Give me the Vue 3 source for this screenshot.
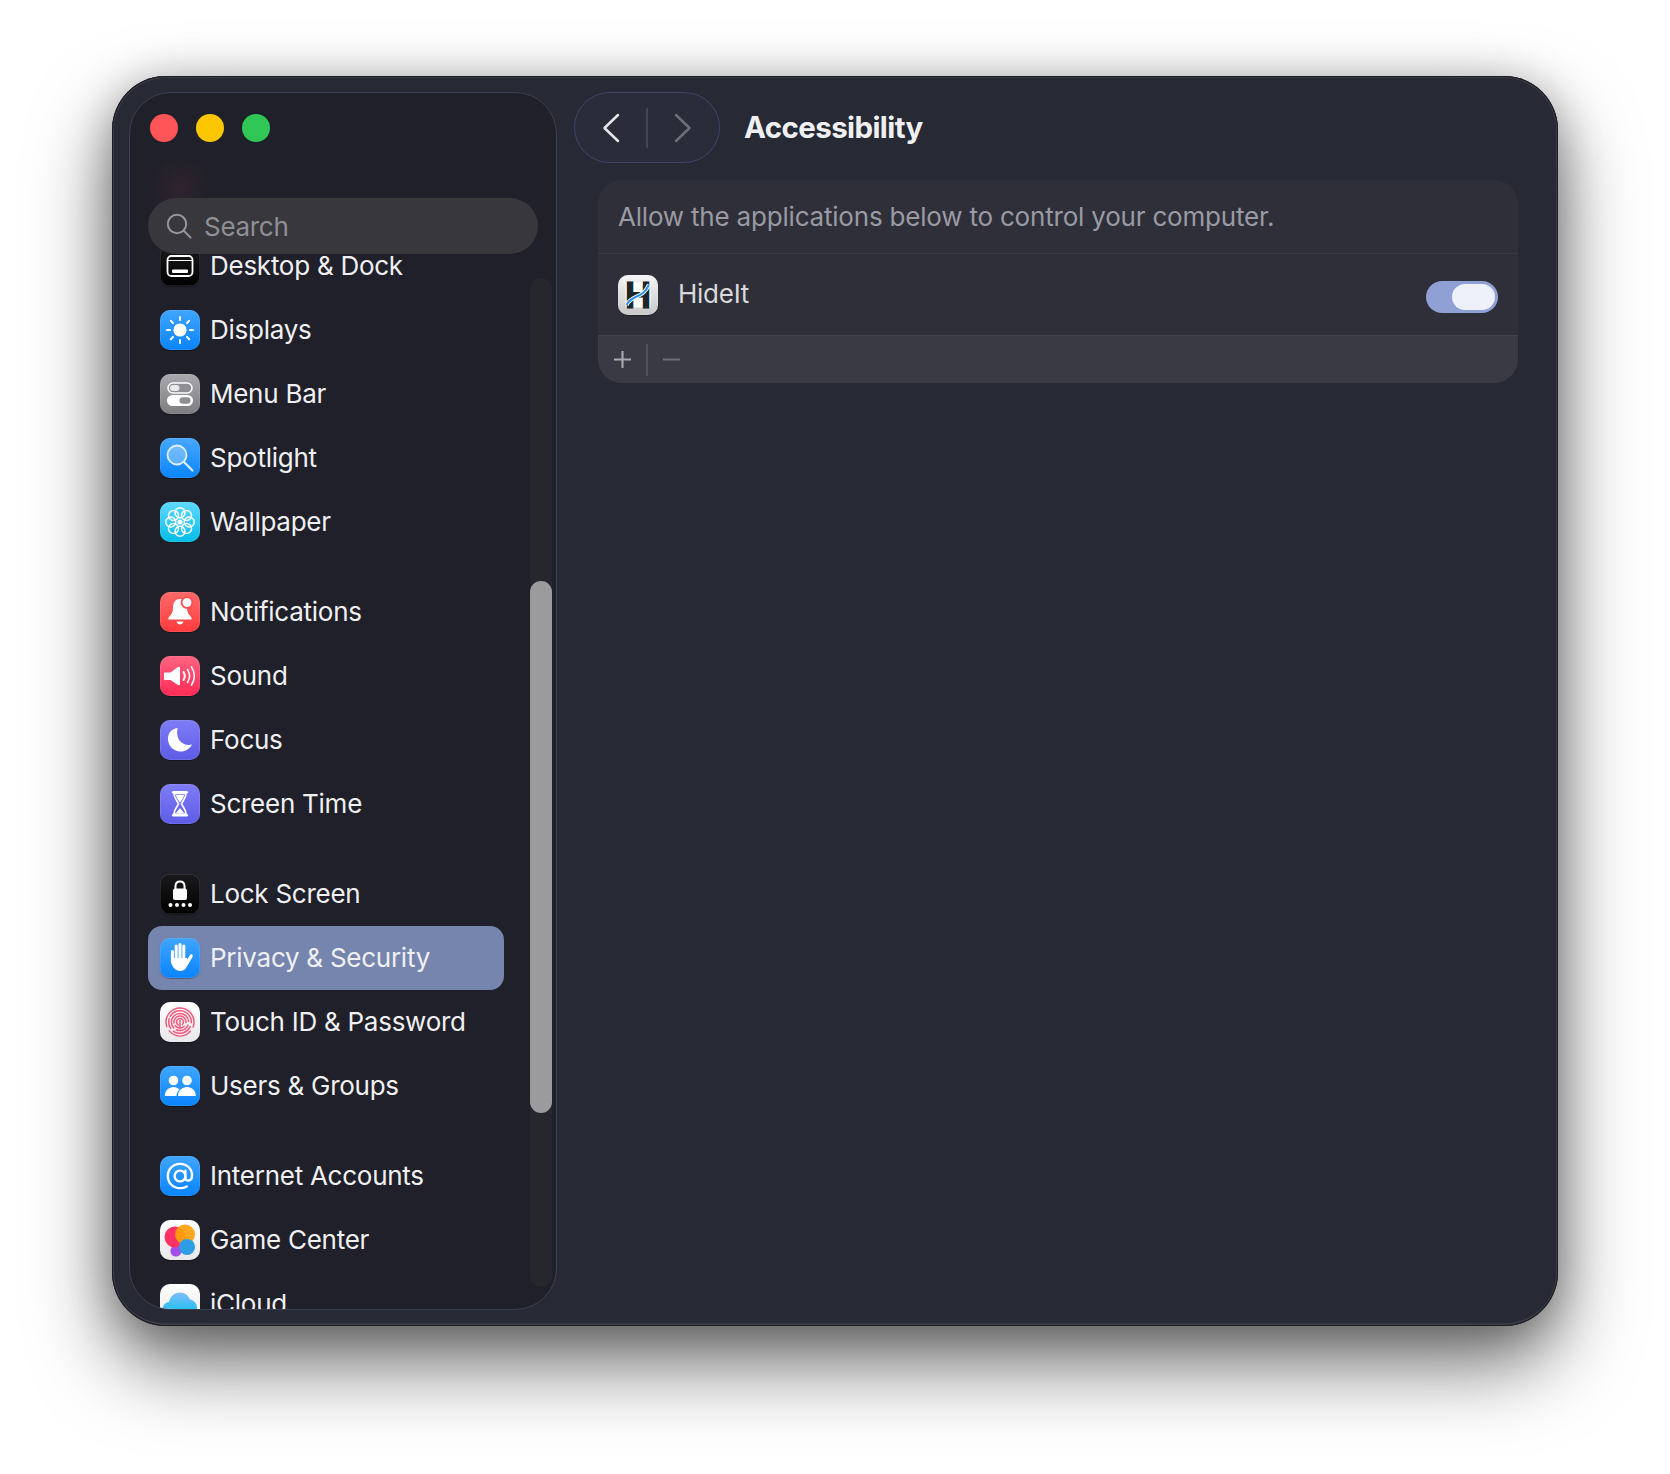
<script setup>
const groups = [
  [
    { id: 'desktop', label: 'Desktop & Dock' },
    { id: 'displays', label: 'Displays' },
    { id: 'menubar', label: 'Menu Bar' },
    { id: 'spotlight', label: 'Spotlight' },
    { id: 'wallpaper', label: 'Wallpaper' },
  ],
  [
    { id: 'notifications', label: 'Notifications' },
    { id: 'sound', label: 'Sound' },
    { id: 'focus', label: 'Focus' },
    { id: 'screentime', label: 'Screen Time' },
  ],
  [
    { id: 'lock', label: 'Lock Screen' },
    { id: 'privacy', label: 'Privacy & Security', active: true },
    { id: 'touchid', label: 'Touch ID & Password' },
    { id: 'users', label: 'Users & Groups' },
  ],
  [
    { id: 'internet', label: 'Internet Accounts' },
    { id: 'gamecenter', label: 'Game Center' },
    { id: 'icloud', label: 'iCloud' },
  ],
]
const rays = [0, 45, 90, 135, 180, 225, 270, 315]
const petals = [0, 45, 90, 135, 180, 225, 270, 315]
</script>

<template>
  <div class="page">
    <div class="window">
      <aside class="sidebar">
        <div class="side-head">
          <div class="lights">
            <span class="light red"></span>
            <span class="light yellow"></span>
            <span class="light green"></span>
          </div>
          <div class="search">
            <svg class="search-icon" viewBox="0 0 26 26" fill="none" stroke="#96969b" stroke-width="2" stroke-linecap="round">
              <circle cx="11" cy="11" r="9.2" />
              <path d="M17.8 17.8 L24.6 24.6" />
            </svg>
            <span class="search-text">Search</span>
          </div>
        </div>

        <div class="list">
          <div v-for="(group, gi) in groups" :key="gi" class="group">
            <div v-for="item in group" :key="item.id" class="row" :class="{ active: item.active }">
              <span class="tile" :class="'t-' + item.id">
                <svg viewBox="0 0 40 40" class="glyph">
                  <template v-if="item.id === 'desktop'">
                    <rect x="7.5" y="10" width="25" height="20" rx="4" fill="none" stroke="#fff" stroke-width="1.8" />
                    <path d="M8 14.5 H32" stroke="#fff" stroke-width="1.2" />
                    <rect x="12" y="23.5" width="16" height="3.6" rx="1" fill="#fff" />
                  </template>
                  <template v-else-if="item.id === 'displays'">
                    <circle cx="20" cy="20" r="6.6" fill="#fff" />
                    <rect v-for="r in rays" :key="r" x="19" y="6" width="2" height="5" rx="1" fill="#fff" :transform="`rotate(${r} 20 20)`" />
                  </template>
                  <template v-else-if="item.id === 'menubar'">
                    <rect x="8" y="9" width="24" height="10" rx="5" fill="#8e8e93" stroke="#fff" stroke-width="1.6" />
                    <rect x="10" y="11" width="9.5" height="6" rx="3" fill="#e9e9ec" />
                    <rect x="7" y="21" width="26" height="11" rx="5.5" fill="#fff" />
                    <rect x="19.5" y="23.2" width="11" height="6.6" rx="3.3" fill="#8e8e93" />
                  </template>
                  <template v-else-if="item.id === 'spotlight'">
                    <circle cx="17" cy="17" r="9.5" fill="rgba(255,255,255,.28)" stroke="#dff0ff" stroke-width="1.8" />
                    <path d="M24 24 L32.5 32.5" stroke="#dff0ff" stroke-width="2.2" stroke-linecap="round" />
                  </template>
                  <template v-else-if="item.id === 'wallpaper'">
                    <circle v-for="p in petals" :key="p" cx="20" cy="10.8" r="5" fill="none" stroke="#fff" stroke-width="1.5" :transform="`rotate(${p} 20 20)`" />
                    <circle cx="20" cy="20" r="2.6" fill="#fff" />
                  </template>
                  <template v-else-if="item.id === 'notifications'">
                    <path d="M20 7 C14.5 7 13 12 13 16 C13 20 11.5 22.5 8.5 25.5 L8.5 27.5 H31.5 V25.5 C28.5 22.5 27 20 27 16 C27 12 25.5 7 20 7Z" fill="#fff" />
                    <path d="M16.5 29.6 H23.5 C23 31.6 21.6 32.4 20 32.4 C18.4 32.4 17 31.6 16.5 29.6Z" fill="#fff" />
                    <circle cx="27" cy="10.5" r="5.4" fill="#fff" stroke="#ff4f50" stroke-width="1.8" />
                  </template>
                  <template v-else-if="item.id === 'sound'">
                    <path d="M5 16.5 H10.5 L18 11 C19 10.4 20 11 20 12 V28 C20 29 19 29.6 18 29 L10.5 24 H5 C4.4 24 4 23.6 4 23 V17.5 C4 17 4.4 16.5 5 16.5Z" fill="#fff" />
                    <path d="M23.5 16 C25 18.4 25 21.6 23.5 24" fill="none" stroke="#fff" stroke-width="2" stroke-linecap="round" />
                    <path d="M27.5 13.5 C30 17.4 30 22.6 27.5 26.5" fill="none" stroke="#fff" stroke-width="1.5" stroke-linecap="round" />
                    <path d="M31.5 11 C35 16.5 35 23.5 31.5 29" fill="none" stroke="#fff" stroke-width="1.5" stroke-linecap="round" />
                  </template>
                  <template v-else-if="item.id === 'focus'">
                    <path d="M17.5 8 C10.5 9 7.5 14.5 8 20 C8.6 26.5 14 31.5 20.5 31.5 C25.5 31.5 29.8 28.8 32 24.5 C24 26.5 15 21 17.5 8Z" fill="#fff" />
                  </template>
                  <template v-else-if="item.id === 'screentime'">
                    <rect x="12" y="7" width="16" height="2.6" rx="1.3" fill="#fff" />
                    <rect x="12" y="30" width="16" height="2.6" rx="1.3" fill="#fff" />
                    <path d="M14 9.5 H26 C26 14 23 16.5 21.5 19.8 C23 23 26 26 26 30 H14 C14 26 17 23 18.5 19.8 C17 16.5 14 14 14 9.5Z" fill="none" stroke="#fff" stroke-width="1.6" />
                    <path d="M15.8 11 H24.2 C23.6 14 21.6 16 20 18.5 C18.4 16 16.4 14 15.8 11Z" fill="#fff" />
                    <path d="M16 29 C17 27 19 26 20 24 C21 26 23 27 24 29Z" fill="#fff" />
                  </template>
                  <template v-else-if="item.id === 'lock'">
                    <path d="M15.5 15 V12 C15.5 9 17.4 7.4 20 7.4 C22.6 7.4 24.5 9 24.5 12 V15" fill="none" stroke="#fff" stroke-width="2" />
                    <rect x="13" y="14.5" width="14" height="11.5" rx="2" fill="#fff" />
                    <circle cx="10.5" cy="31" r="2" fill="#fff" />
                    <circle cx="17" cy="31" r="2" fill="#fff" />
                    <circle cx="23.5" cy="31" r="2" fill="#fff" />
                    <circle cx="30" cy="31" r="2" fill="#fff" />
                  </template>
                  <template v-else-if="item.id === 'privacy'">
                    <g stroke="#fff" stroke-linecap="round" fill="none">
                      <path d="M12.4 13.5 V24" stroke-width="3" />
                      <path d="M16.2 8 V22" stroke-width="3" />
                      <path d="M20 6.5 V22" stroke-width="3" />
                      <path d="M23.8 8 V22" stroke-width="3" />
                      <path d="M26.5 26 L31.2 18" stroke-width="3.3" />
                    </g>
                    <path d="M11 20 H27 L28.4 24 C27.6 29 24.6 33 20.5 33 C15.5 33 11 28.5 11 22Z" fill="#fff" />
                  </template>
                  <template v-else-if="item.id === 'touchid'">
                    <g fill="none" stroke="#f2587c" stroke-width="1.5" stroke-linecap="round">
                      <circle cx="20" cy="20" r="14" stroke-dasharray="44 5 24 5 9 4" transform="rotate(200 20 20)" />
                      <circle cx="20" cy="20" r="11.3" stroke-dasharray="30 4 20 4 10 3" transform="rotate(210 20 20)" />
                      <circle cx="20" cy="20" r="8.6" stroke-dasharray="26 4 14 3" transform="rotate(180 20 20)" />
                      <circle cx="20" cy="20" r="6" stroke-dasharray="20 4 10 3" transform="rotate(170 20 20)" />
                      <circle cx="20" cy="20" r="3.4" stroke-dasharray="12 4 5 1" transform="rotate(200 20 20)" />
                      <path d="M20 18.5 V26" />
                    </g>
                  </template>
                  <template v-else-if="item.id === 'users'">
                    <circle cx="13.5" cy="14.5" r="4.8" fill="#fff" />
                    <circle cx="27" cy="14.5" r="4.8" fill="#fff" />
                    <path d="M4.8 30 C4.8 24.6 8.8 21 13.5 21 C16 21 18 22 19.4 23.4 C17.8 25 16.8 27 16.4 30Z" fill="#fff" />
                    <path d="M18 30 C18 24.6 22 21 27 21 C32 21 35.8 24.6 35.8 30Z" fill="#fff" />
                  </template>
                  <template v-else-if="item.id === 'internet'">
                    <g fill="none" stroke="#fff" stroke-width="2.3" stroke-linecap="round">
                      <circle cx="20" cy="20" r="5.4" />
                      <path d="M25.4 14.6 V22 C25.4 25.6 31.6 25.6 32 20.5 C32.6 12.8 26.8 7.8 20 7.8 C13 7.8 7.8 13.2 7.8 20 C7.8 27 13.2 32.2 20 32.2 C22.6 32.2 24.8 31.6 26.8 30.4" />
                    </g>
                  </template>
                  <template v-else-if="item.id === 'gamecenter'">
                    <circle cx="16" cy="31" r="5.6" fill="#a34eea" />
                    <circle cx="15" cy="17" r="10.5" fill="#ff3268" />
                    <circle cx="25" cy="14.5" r="10" fill="#ff9f0a" opacity=".92" />
                    <circle cx="27" cy="27" r="8" fill="#2f9ce6" />
                  </template>
                  <template v-else-if="item.id === 'icloud'">
                    <defs>
                      <linearGradient id="cloudfill" x1="0" y1="0" x2="0" y2="1">
                        <stop offset="0" stop-color="#7fbdfb" />
                        <stop offset="1" stop-color="#0fc0ea" />
                      </linearGradient>
                    </defs>
                    <path d="M10 31 C5.5 31 3 27.8 3 24.5 C3 20.8 5.8 18.2 9 18 C10 12.5 14.5 8.5 20 8.5 C25 8.5 28.4 11.5 29.8 15.5 C34 16 37 19.5 37 23.8 C37 28 34 31 30 31Z" fill="url(#cloudfill)" />
                  </template>
                </svg>
              </span>
              <span class="row-label">{{ item.label }}</span>
            </div>
          </div>
        </div>

        <div class="scrolltrack"><div class="scrollthumb"></div></div>
      </aside>

      <main class="main">
        <header class="topbar">
          <div class="navpill">
            <button class="navbtn">
              <svg viewBox="0 0 20 32" class="chev" fill="none" stroke="#e6e6e9" stroke-width="2.5" stroke-linecap="round" stroke-linejoin="round">
                <path d="M17 3 L3.5 16 L17 29" />
              </svg>
            </button>
            <span class="navdiv"></span>
            <button class="navbtn">
              <svg viewBox="0 0 20 32" class="chev" fill="none" stroke="#6d6e76" stroke-width="2.5" stroke-linecap="round" stroke-linejoin="round">
                <path d="M3 3 L16.5 16 L3 29" />
              </svg>
            </button>
          </div>
          <h1 class="title">Accessibility</h1>
        </header>

        <section class="card">
          <div class="card-head">Allow the applications below to control your computer.</div>
          <div class="card-row">
            <span class="tile t-hideit">
              <svg viewBox="0 0 40 40" class="glyph">
                <rect x="7.5" y="7.5" width="25" height="25" fill="#fff" />
                <text x="20" y="32.5" text-anchor="middle" font-family="Liberation Sans, sans-serif" font-weight="700" font-size="36" stroke="#20242c" stroke-width="1.2" fill="#20242c">H</text>
                <path d="M8.5 30 C14 19 25 24 31 9.5" fill="none" stroke="#fff" stroke-width="4" />
                <path d="M8.5 30 C14 19 25 24 31 9.5" fill="none" stroke="#2b93e8" stroke-width="2" />
              </svg>
            </span>
            <span class="app-name">HideIt</span>
            <span class="toggle"><span class="knob"></span></span>
          </div>
          <div class="card-tools">
            <span class="tool plus"><svg viewBox="0 0 20 20" stroke="#aaaab0" stroke-width="2.2"><path d="M1 10 H19 M10 1 V19" /></svg></span>
            <span class="tooldiv"></span>
            <span class="tool minus"><svg viewBox="0 0 20 20" stroke="#6f6f78" stroke-width="2.2"><path d="M1 10 H19" /></svg></span>
          </div>
        </section>
      </main>
    </div>
  </div>
</template>

<style>
html, body { background: #fff; }
</style>

<style scoped>
.page {
  width: 1670px;
  height: 1474px;
  box-sizing: border-box;
  padding: 76px 112px 148px;
  background: #fff;
  font-family: Inter, "Liberation Sans", sans-serif;
  overflow: hidden;
}
.window {
  width: 100%;
  height: 100%;
  box-sizing: border-box;
  padding: 16px 40px 16px 17px;
  display: flex;
  background: #272935;
  border-radius: 54px;
  box-shadow:
    inset 0 0 0 1px #1b1b20,
    inset 0 0 0 2px #3b3c47,
    inset 0 -2.5px 0 #484955,
    0 38px 80px rgba(0, 0, 0, 0.56),
    0 6px 44px rgba(0, 0, 0, 0.26);
}
.sidebar {
  position: relative;
  width: 428px;
  box-sizing: border-box;
  flex: none;
  display: flex;
  flex-direction: column;
  overflow: hidden;
  border: 1.5px solid #3c3f54;
  border-radius: 42px;
  padding: 0 18px;
  background:
    radial-gradient(circle at 50px 95px, rgba(130, 50, 75, 0.16), transparent 34px),
    #1f2029;
}
.side-head {
  position: relative;
  z-index: 2;
  flex: none;
}
.lights {
  display: flex;
  gap: 18px;
  padding: 21px 0 0 2px;
}
.light {
  width: 28px;
  height: 28px;
  border-radius: 50%;
}
.red { background: #ff5557; }
.yellow { background: #fcc700; }
.green { background: #2fc755; }
.search {
  margin-top: 56px;
  width: 390px;
  height: 56px;
  border-radius: 28px;
  background: #37373c;
  display: flex;
  align-items: center;
  padding-left: 18px;
  box-sizing: border-box;
}
.search-icon {
  width: 26px;
  height: 26px;
  flex: none;
}
.search-text {
  margin-left: 12px;
  font-size: 26px;
  letter-spacing: -0.3px;
  color: #8f8f94;
}
.list {
  margin-top: -20px;
  flex: none;
  position: relative;
  z-index: 1;
}
.group + .group { margin-top: 26px; }
.row {
  width: 356px;
  height: 64px;
  box-sizing: border-box;
  padding-left: 12px;
  display: flex;
  align-items: center;
  gap: 10px;
  border-radius: 14px;
}
.row.active { background: #7585ae; }
.row-label {
  padding-bottom: 2px;
  font-size: 26px;
  letter-spacing: -0.26px;
  color: #f0f0f2;
  white-space: nowrap;
}
.tile {
  flex: none;
  width: 40px;
  height: 40px;
  border-radius: 10px;
  overflow: hidden;
  display: block;
  box-shadow: inset 0 0 0 0.5px rgba(255, 255, 255, 0.2), 0 1px 1px rgba(0, 0, 0, 0.3);
}
.glyph { display: block; width: 40px; height: 40px; }
.t-desktop, .t-lock { background: linear-gradient(#1a1a1c, #000); }
.t-displays, .t-users, .t-internet, .t-privacy { background: linear-gradient(#40a5ff, #0a84ff); }
.t-spotlight { background: linear-gradient(#48a8ff, #0a84ff); }
.t-menubar { background: linear-gradient(#a9a9ad, #7c7c81); }
.t-wallpaper { background: linear-gradient(#5fd9ff, #04bde6); }
.t-notifications { background: linear-gradient(#ff6a68, #ff3b3f); }
.t-sound { background: linear-gradient(#ff6482, #ff2a55); }
.t-focus, .t-screentime { background: linear-gradient(#7f7cf6, #5e5ce6); }
.t-touchid, .t-gamecenter, .t-icloud { background: linear-gradient(#fff, #e8e8ea); }
.t-hideit { background: linear-gradient(#f5f5f5, #c8c8c8); }
.scrolltrack {
  position: absolute;
  z-index: 1;
  right: 4px;
  top: 185px;
  bottom: 22px;
  width: 22px;
  border-radius: 11px;
  background: #26272d;
}
.scrollthumb {
  position: absolute;
  left: 0;
  right: 0;
  top: 303px;
  height: 532px;
  border-radius: 11px;
  background: #9b9b9e;
}
.main {
  flex: 1;
  min-width: 0;
  margin-left: 17px;
  display: flex;
  flex-direction: column;
}
.topbar {
  height: 71px;
  display: flex;
  align-items: center;
}
.navpill {
  width: 146px;
  height: 71px;
  box-sizing: border-box;
  border: 1.5px solid #3f4667;
  border-radius: 36px;
  background: #2a2c39;
  display: flex;
  align-items: center;
}
.navbtn {
  flex: 1;
  height: 100%;
  padding: 0;
  border: 0;
  background: none;
  display: flex;
  align-items: center;
  justify-content: center;
}
.chev { width: 20px; height: 32px; }
.navdiv {
  width: 1.5px;
  height: 40px;
  background: #44454f;
  flex: none;
}
.title {
  margin: 0 0 2px 24px;
  font-size: 29.5px;
  font-weight: 700;
  letter-spacing: -0.6px;
  color: #f0f0f2;
}
.card {
  margin: 17px 0 0 24px;
  border-radius: 24px;
  overflow: hidden;
  background: #2f2f3a;
}
.card-head {
  height: 74px;
  box-sizing: border-box;
  padding: 0 20px;
  display: flex;
  align-items: center;
  font-size: 26px;
  letter-spacing: -0.2px;
  color: #9a9aa2;
  border-bottom: 1.5px solid #3a3a45;
}
.card-row {
  height: 82px;
  box-sizing: border-box;
  padding: 0 20px;
  display: flex;
  align-items: center;
  border-bottom: 1.5px solid #42424c;
}
.app-name {
  margin-left: 20px;
  padding-bottom: 3px;
  font-size: 26px;
  letter-spacing: -0.26px;
  color: #d9d9dc;
}
.toggle {
  margin: 5px 0 0 auto;
  width: 72px;
  height: 32px;
  border-radius: 16px;
  background: #8ea0d4;
  display: flex;
  align-items: center;
  justify-content: flex-end;
  padding-right: 3px;
  box-sizing: border-box;
}
.knob {
  width: 43px;
  height: 26px;
  border-radius: 13px;
  background: #eef1fa;
}
.card-tools {
  height: 47px;
  background: #3a3a44;
  display: flex;
  align-items: center;
}
.tool { display: block; flex: none; }
.tool svg { display: block; width: 19px; height: 19px; }
.plus { margin-left: 15px; }
.tooldiv {
  margin-left: 14px;
  width: 1.5px;
  height: 32px;
  background: #51515b;
  flex: none;
}
.minus { margin-left: 14px; }
</style>
